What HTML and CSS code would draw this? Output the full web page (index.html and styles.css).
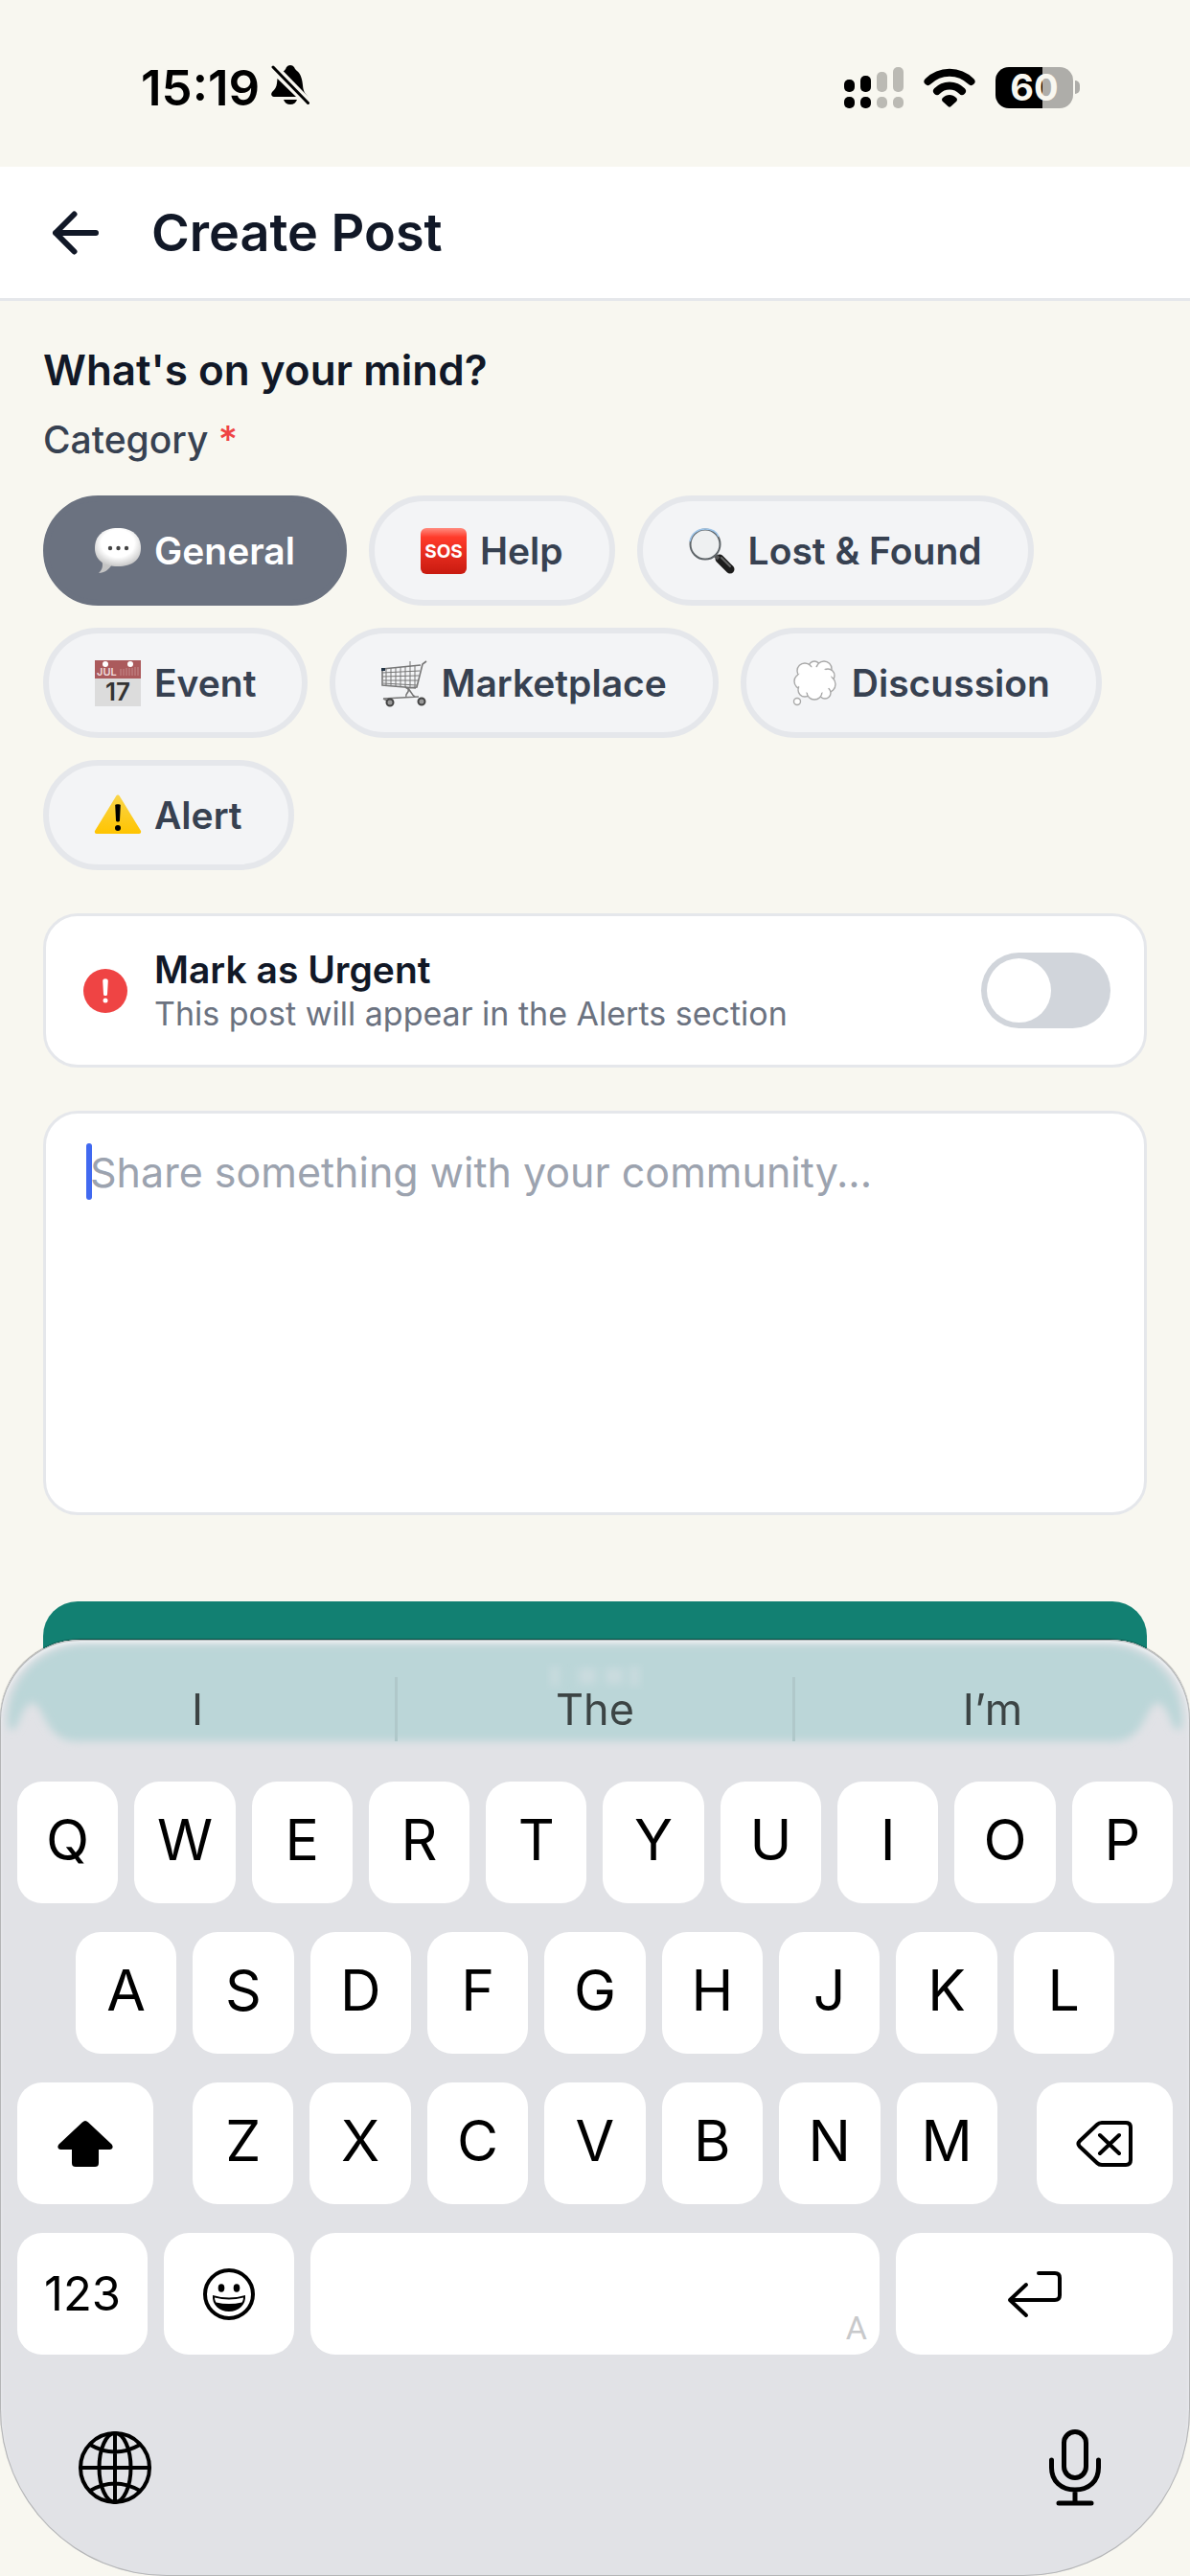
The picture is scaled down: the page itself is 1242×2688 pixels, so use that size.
FILE: index.html
```
<!DOCTYPE html>
<html lang="en">
<head>
<meta charset="UTF-8">
<meta name="viewport" content="width=device-width, initial-scale=1.0">
<title>Create Post</title>
<link rel="stylesheet" href="styles.css">
</head>

<body>

<div class="status-bar">
  <div class="status-left">
    <span class="time">15:19</span>
    <svg width="40" height="50" viewBox="0 0 40 50">
      <path d="M12 9C14 7.500 15 6.500 16 4a5 5 0 0 1 8 0c.6 1.500 1.800 3.300 3 4 4 3 5.500 9 6 15 .4 6 2 8 5 11.500.5 1 .8 2.800.5 3.500z"/>
      <path d="M6.500 16L26 35H3c-3 0-3.500-3-2-5 3-3 4.500-5 5-9z"/>
      <path d="M13 38h14c-1 3-3.500 5-7 5s-6-2-7-5z"/>
      <path class="bell-gap" d="M4 5L38 40"/>
      <path class="bell-slash" d="M2 4L38.500 41.500"/>
    </svg>
  </div>
  <div class="status-right">
    <svg width="62" height="43" viewBox="0 0 62 43">
      <rect x="0" y="13" width="11" height="13" rx="5"/>
      <rect x="17" y="9" width="11" height="17" rx="5"/>
      <rect x="0" y="31" width="11" height="12" rx="5"/>
      <rect x="17" y="31" width="11" height="12" rx="5"/>
      <g fill="#bbbab4">
        <rect x="34" y="5" width="11" height="21" rx="5"/>
        <rect x="51" y="0" width="11" height="26" rx="5"/>
        <rect x="34" y="31" width="11" height="12" rx="5"/>
        <rect x="51" y="31" width="11" height="12" rx="5"/>
      </g>
    </svg>
    <svg width="54" height="43" viewBox="0 0 54 43">
      <g fill="none" stroke="#000" stroke-width="8" stroke-linecap="round">
        <path d="M4.500 15C17 2.500 37 2.500 49.500 15"/>
        <path d="M14 25C21 17.500 33 17.500 40 25"/>
      </g>
      <path d="M20 32c4-4 10-4 14 0 1.500 1.500 1 3 0 4l-5.500 5c-1 1-2 1-3 0L20 36c-1-1-1.500-2.500 0-4z"/>
    </svg>
    <div class="battery"><span class="battery-level">60</span><span class="battery-cap"></span></div>
  </div>
</div>

<header class="header">
  <button class="back" aria-label="Back">
    <svg width="50" height="46" viewBox="0 0 50 46"><path d="M23.500 3.500L4 23l19.500 19.500M4 23h42"/></svg>
  </button>
  <h1>Create Post</h1>
</header>

<main class="content">
  <h2>What's on your mind?</h2>
  <p class="field-label" id="category-label">Category <span class="required">*</span></p>

  <div class="chips" role="group" aria-labelledby="category-label">
    <button class="chip active">
      <svg viewBox="0 0 48 48">
        <defs>
          <radialGradient id="bubble" cx=".5" cy=".4" r=".6">
            <stop offset=".6" stop-color="#fff"/>
            <stop offset="1" stop-color="#c9c9c9"/>
          </radialGradient>
        </defs>
        <path fill="#c4c4c4" d="M7 33c2 6 1 10-3 14 6 0 11-4 14-9z"/>
        <path fill="url(#bubble)" d="M24 0c15 0 24 8 24 21 0 12-9 19-24 19S0 33 0 21C0 8 9 0 24 0z"/>
        <g fill="#444"><circle cx="16" cy="21" r="2.200"/><circle cx="24.500" cy="21" r="2.200"/><circle cx="33" cy="21" r="2.200"/></g>
      </svg>General
    </button>
    <button class="chip">
      <svg viewBox="0 0 48 48">
        <defs>
          <linearGradient id="sos" x1="0" y1="0" x2="0" y2="1">
            <stop offset="0" stop-color="#ff8c80"/>
            <stop offset=".2" stop-color="#ff3b2a"/>
            <stop offset="1" stop-color="#c81a10"/>
          </linearGradient>
        </defs>
        <rect width="48" height="48" rx="6" fill="url(#sos)"/>
        <text x="24" y="31" class="sos-text">SOS</text>
      </svg>Help
    </button>
    <button class="chip">
      <svg viewBox="0 0 48 48">
        <path d="M32 32l11 11" stroke="#1c1c1c" stroke-width="9" stroke-linecap="round"/>
        <path d="M26 27l5 5" stroke="#555" stroke-width="4"/>
        <path d="M34 31l9 9" stroke="#666" stroke-width="2" stroke-linecap="round"/>
        <circle cx="17" cy="17" r="15.500" fill="#eef0f1" stroke="#5e6468" stroke-width="2"/>
        <path d="M1 14C3 5 10 1 17 1s12 3 14 8" fill="none" stroke="#9fc6ea" stroke-width="1.500"/>
      </svg>Lost &amp; Found
    </button>
    <button class="chip">
      <svg viewBox="0 0 48 48">
        <rect width="48" height="48" fill="#dcdcdc"/>
        <rect width="48" height="19" fill="#ab5a5c"/>
        <circle cx="11" cy="4" r="3" fill="#fff"/><circle cx="37" cy="4" r="3" fill="#fff"/>
        <path d="M27 9v7M30 9v7M33 8v8M36 8v8M39 8v8M42 7v9M45 7v9" stroke="#c58a8b"/>
        <text x="2" y="16" class="cal-month">JUL</text>
        <text x="24" y="42" class="cal-day">17</text>
      </svg>Event
    </button>
    <button class="chip">
      <svg viewBox="0 0 48 48" fill="none" stroke="#777" stroke-width="1">
        <path d="M47 1l-4 3-6 24-9 1M1 9l40-4M1 9v17l35 3" stroke-width="1.600"/>
        <path d="M1 13l39-2M1 17l38-1M2 21l36 0M2 24l35 2M5 9v17M10 8v18M15 8v19M20 7v20M25 7v21M30 6v22M35 6v22M30 1v6"/>
        <path d="M25 28c7 3 5 7 10 10M28 29c2 5-4 6-2 9M2 40l37-2M2 40l6 3" stroke-width="1.600"/>
        <rect x="0" y="8" width="4" height="3" fill="#234" stroke="none"/>
        <circle cx="9" cy="44" r="3.500" fill="#999" stroke="#444" stroke-width="2"/>
        <circle cx="42" cy="43" r="3.500" fill="#999" stroke="#444" stroke-width="2"/>
      </svg>Marketplace
    </button>
    <button class="chip">
      <svg viewBox="0 0 48 48">
        <g fill="#fff" stroke="#a9a9a9" stroke-width="1.400">
          <circle cx="23" cy="7" r="6"/><circle cx="13" cy="11" r="8"/><circle cx="33" cy="9" r="8"/>
          <circle cx="37" cy="16" r="7"/><circle cx="10" cy="22" r="8"/><circle cx="36" cy="25" r="9"/>
          <circle cx="13" cy="31" r="7"/><circle cx="34" cy="34" r="6"/><circle cx="23" cy="33" r="8"/>
          <circle cx="5" cy="43" r="3.500"/>
        </g>
        <ellipse cx="23" cy="21" rx="18" ry="14" fill="#fff"/>
      </svg>Discussion
    </button>
    <button class="chip">
      <svg viewBox="0 0 48 48">
        <defs>
          <linearGradient id="warn" x1="0" y1="0" x2="0" y2="1">
            <stop offset="0" stop-color="#f9d54a"/>
            <stop offset="1" stop-color="#ffc400"/>
          </linearGradient>
        </defs>
        <path fill="url(#warn)" d="M22 4c1-2 3-2 4 0l22 36c.5 1.500 0 3-2 3H2c-2 0-2.500-1.500-2-3z"/>
        <path d="M21.200 13c0-1 5.600-1 5.600 0L26 29c0 2-4 2-4 0z"/>
        <circle cx="24" cy="37" r="3"/>
      </svg>Alert
    </button>
  </div>

  <div class="urgent">
    <svg width="54" height="54" viewBox="0 0 54 54">
      <circle cx="27" cy="27" r="23" fill="#ef4444"/>
      <path fill="#fff" d="M24.200 16.500c0-3 5.600-3 5.600 0L29 30.500c0 2-4 2-4 0z"/>
      <circle cx="27" cy="37" r="2.500" fill="#fff"/>
    </svg>
    <label class="urgent-text" for="urgent">
      <span class="urgent-title">Mark as Urgent</span>
      <span class="urgent-note">This post will appear in the Alerts section</span>
    </label>
    <input type="checkbox" id="urgent" class="toggle">
  </div>

  <div class="message">
    <textarea aria-label="Post text" placeholder="Share something with your community..."></textarea>
    <span class="caret"></span>
  </div>

  <button class="submit" aria-label="Post"></button>
</main>

<div class="keyboard">
  <!-- button colour showing through the top of the keyboard -->
  <svg class="glow" viewBox="0 0 1242 130" preserveAspectRatio="none">
    <defs>
      <filter id="soft" x="-5%" y="-20%" width="110%" height="140%"><feGaussianBlur stdDeviation="4"/></filter>
    </defs>
    <path filter="url(#soft)" fill="#bbd6d8" d="M85 5H1157C1200 7 1234 40 1234 84c0 10-3 12-8 8-6-8-8-26-18-26-12 0-12 40-46 40H80c-34 0-34-40-46-40-10 0-12 18-18 26-5 4-8 2-8-8C8 40 42 7 85 5z"/>
    <g filter="url(#soft)" fill="#cbdcdf">
      <rect x="575" y="28" width="8" height="20"/><rect x="604" y="30" width="18" height="16"/>
      <rect x="632" y="30" width="18" height="16"/><rect x="658" y="28" width="9" height="20"/>
    </g>
  </svg>

  <div class="suggestions">
    <button>I</button>
    <button>The</button>
    <button>I’m</button>
  </div>

  <div class="keys">
    <div class="key-row">
      <button>Q</button><button>W</button><button>E</button><button>R</button><button>T</button><button>Y</button><button>U</button><button>I</button><button>O</button><button>P</button>
    </div>
    <div class="key-row middle">
      <button>A</button><button>S</button><button>D</button><button>F</button><button>G</button><button>H</button><button>J</button><button>K</button><button>L</button>
    </div>
    <div class="key-row third">
      <button class="icon-key" aria-label="Shift">
        <svg width="58" height="50" viewBox="0 0 58 50"><path d="M26 2.500c2-2 4-2 6 0L56 25c3 3 1.500 6-1.500 6H43v14c0 3-1.500 4-4 4H19c-2.500 0-4-1-4-4V31H3.500C.5 31-1 28 2 25z"/></svg>
      </button>
      <div class="letters">
        <button>Z</button><button>X</button><button>C</button><button>V</button><button>B</button><button>N</button><button>M</button>
      </div>
      <button class="icon-key" aria-label="Delete">
        <svg width="60" height="50" viewBox="0 0 60 50" class="line"><path d="M27 3h25q5 0 5 5v34q0 5-5 5H27q-3 0-5-2L4 28q-3-3 0-6L22 5q2-2 5-2zM25 16l20 19M45 16L25 35"/></svg>
      </button>
    </div>
    <div class="key-row bottom">
      <button class="icon-key num">123</button>
      <button class="icon-key" aria-label="Emoji">
        <svg width="56" height="56" viewBox="0 0 56 56">
          <circle cx="28" cy="28" r="25" fill="none" stroke="#000" stroke-width="4"/>
          <ellipse cx="20" cy="21.500" rx="3.300" ry="4.200"/><ellipse cx="36" cy="21.500" rx="3.300" ry="4.200"/>
          <path d="M11 29q17 5 34 0c1 10-7 17-17 17s-18-7-17-17z"/>
          <path fill="#fff" d="M13 31.500q15 4 30 0c0 2-.5 3-1.500 5q-13.500 3-27 0c-1-2-1.500-3-1.500-5z"/>
        </svg>
      </button>
      <button class="space" aria-label="Space"><span>A</span></button>
      <button class="icon-key" aria-label="Return">
        <svg width="58" height="50" viewBox="0 0 58 50" class="line"><path d="M33 3h17q5 0 5 5v18q0 5-5 5H3M20 15L3 31l17 16"/></svg>
      </button>
    </div>
  </div>

  <div class="keyboard-footer">
    <button aria-label="Next keyboard">
      <svg width="78" height="78" viewBox="0 0 78 78" class="line globe">
        <circle cx="39" cy="39" r="36"/>
        <ellipse cx="39" cy="39" rx="16.500" ry="36"/>
        <path d="M39 3v72M3 39h72M13 15q26 15 52 0M13 63q26-15 52 0"/>
      </svg>
    </button>
    <button aria-label="Dictate">
      <svg width="54" height="80" viewBox="0 0 54 80" class="line mic">
        <rect x="15.500" y="2.500" width="23" height="48" rx="11.500"/>
        <path d="M2.500 32v8c0 14 10 23 24.500 23s24.500-9 24.500-23v-8M27 63v13M10 77h34"/>
      </svg>
    </button>
  </div>
</div>

</body>
</html>
```
FILE: styles.css
```
* {
  box-sizing: border-box;
}

body {
  margin: 0;
  min-height: 100vh;
  background: #f8f7f0;
  color: #111827;
  font-family: Inter, "Liberation Sans", sans-serif;
}

button {
  margin: 0;
  padding: 0;
  border: none;
  background: none;
  color: inherit;
  font-family: inherit;
}

svg {
  display: block;
  flex: none;
}

/* Status bar */
.status-bar {
  display: flex;
  justify-content: space-between;
  height: 174px;
  padding: 66px 115px 0 147px;
  color: #000;
}
.status-left,
.status-right {
  display: flex;
  align-items: center;
  height: 50px;
}
.status-left {
  gap: 12px;
}
.status-right {
  gap: 21px;
}
.time {
  font-size: 51px;
  font-weight: 600;
}
.bell-gap {
  stroke: #f8f7f0;
  stroke-width: 8;
}
.bell-slash {
  stroke: #000;
  stroke-width: 3;
  stroke-linecap: round;
}
.battery {
  display: flex;
  align-items: center;
  gap: 2px;
}
.battery-level {
  width: 81px;
  height: 43px;
  border-radius: 14px;
  background: linear-gradient(to right, #000 60%, #aeada9 60%);
  color: #f8f7f0;
  font-size: 38px;
  font-weight: 700;
  line-height: 43px;
  text-align: center;
}
.battery-cap {
  width: 5px;
  height: 14px;
  border-radius: 0 5px 5px 0;
  background: #aeada9;
}

/* Header */
.header {
  display: flex;
  align-items: center;
  gap: 54px;
  height: 140px;
  padding: 0 54px;
  background: #fff;
  border-bottom: 3px solid #e5e7eb;
}
.back svg {
  fill: none;
  stroke: #111827;
  stroke-width: 6;
  stroke-linecap: round;
  stroke-linejoin: round;
}
.header h1 {
  margin: 0;
  font-size: 54px;
  font-weight: 600;
}

/* Form */
.content {
  padding: 45px;
}
.content h2 {
  margin: 0;
  font-size: 44px;
  font-weight: 600;
  line-height: 54px;
}
.field-label {
  margin: 22px 0 34px;
  color: #374151;
  font-size: 39px;
  font-weight: 500;
  line-height: 48px;
}
.required {
  color: #ef4444;
}

.chips {
  display: flex;
  flex-wrap: wrap;
  gap: 23px;
}
.chip {
  display: flex;
  align-items: center;
  gap: 14px;
  height: 115px;
  padding: 0 48px;
  border: 6px solid #e5e7eb;
  border-radius: 60px;
  background: #f3f4f6;
  color: #374151;
  font-size: 39px;
  font-weight: 600;
}
.chip svg {
  width: 48px;
  height: 48px;
  overflow: visible;
}
.chip.active {
  background: #6b7280;
  border-color: #6b7280;
  color: #fff;
}
.sos-text {
  fill: #fff;
  font-size: 19px;
  font-weight: 700;
  text-anchor: middle;
}
.cal-month {
  fill: #f0dcdc;
  font-size: 11px;
}
.cal-day {
  fill: #333;
  font-size: 26px;
  text-anchor: middle;
}

.urgent {
  display: flex;
  align-items: center;
  gap: 24px;
  margin: 45px 0;
  padding: 32px 35px;
  border: 3px solid #e5e7eb;
  border-radius: 36px;
  background: #fff;
}
.urgent-text {
  display: flex;
  flex-direction: column;
  flex: 1;
}
.urgent-title {
  font-size: 39px;
  font-weight: 600;
  line-height: 48px;
}
.urgent-note {
  color: #6b7280;
  font-size: 34px;
  line-height: 43px;
}
.toggle {
  appearance: none;
  width: 135px;
  height: 79px;
  margin: 0;
  padding: 6px;
  border-radius: 40px;
  background: #d1d5db;
}
.toggle::before {
  content: "";
  display: block;
  width: 67px;
  height: 67px;
  border-radius: 50%;
  background: #fff;
}
.toggle:checked {
  background: #128072;
}
.toggle:checked::before {
  margin-left: auto;
}

.message {
  position: relative;
}
.message textarea {
  display: block;
  width: 100%;
  height: 422px;
  padding: 32px 46px;
  border: 3px solid #e5e7eb;
  border-radius: 36px;
  outline: none;
  background: #fff;
  color: #111827;
  font-family: inherit;
  font-size: 43px;
  line-height: 58px;
  resize: none;
}
.message textarea::placeholder {
  color: #9ca3af;
}
.caret {
  position: absolute;
  left: 45px;
  top: 34px;
  width: 6px;
  height: 59px;
  border-radius: 3px;
  background: #4169f0;
}
.submit {
  display: block;
  width: 100%;
  height: 144px;
  margin-top: 90px;
  border-radius: 36px;
  background: #128072;
}

/* Keyboard, sits over the page */
.keyboard {
  position: fixed;
  left: 0;
  right: 0;
  bottom: 0;
  overflow: hidden;
  border-radius: 84px 84px 174px 174px;
  background: #e1e2e6;
  box-shadow: inset 0 0 0 1px #b4b5b6, inset 0 4px 4px #f4f4f6, 0 -1px 1px rgba(0, 0, 0, 0.4);
}
.glow {
  position: absolute;
  left: 0;
  top: 0;
  width: 100%;
  height: 130px;
}
.suggestions {
  position: relative;
  display: flex;
  padding-top: 39px;
}
.suggestions button {
  flex: 1;
  height: 67px;
  color: #3c4444;
  font-size: 45px;
}
.suggestions button + button {
  border-left: 3px solid #b0c8ca;
}

.keys {
  display: flex;
  flex-direction: column;
  gap: 30px;
  padding: 42px 18px 0;
}
.key-row,
.letters {
  display: flex;
  gap: 17px;
}
.key-row button {
  flex: 1;
  height: 127px;
  padding-bottom: 6px;
  border-radius: 26px;
  background: #fff;
  color: #000;
  font-size: 59px;
}
.key-row.middle {
  padding: 0 61px;
}
.key-row.third {
  display: grid;
  grid-template-columns: 142fr 840fr 142fr;
  gap: 41px;
}
.key-row.bottom {
  display: grid;
  grid-template-columns: 136fr 136fr 594fr 289fr;
}
.key-row .icon-key {
  display: flex;
  align-items: center;
  justify-content: center;
  padding: 0;
}
.key-row .num {
  font-size: 49px;
}
.key-row .space {
  display: flex;
  align-items: flex-end;
  justify-content: flex-end;
  padding: 0 13px 10px;
}
.space span {
  color: #c8c9cb;
  font-family: Roboto, sans-serif;
  font-size: 34px;
  line-height: 36px;
}
.line {
  fill: none;
  stroke: #000;
  stroke-width: 4;
  stroke-linecap: round;
  stroke-linejoin: round;
}
.mic {
  stroke-width: 5;
}

.keyboard-footer {
  display: flex;
  align-items: center;
  justify-content: space-between;
  height: 231px;
  padding: 4px 93px 0 81px;
}
```
